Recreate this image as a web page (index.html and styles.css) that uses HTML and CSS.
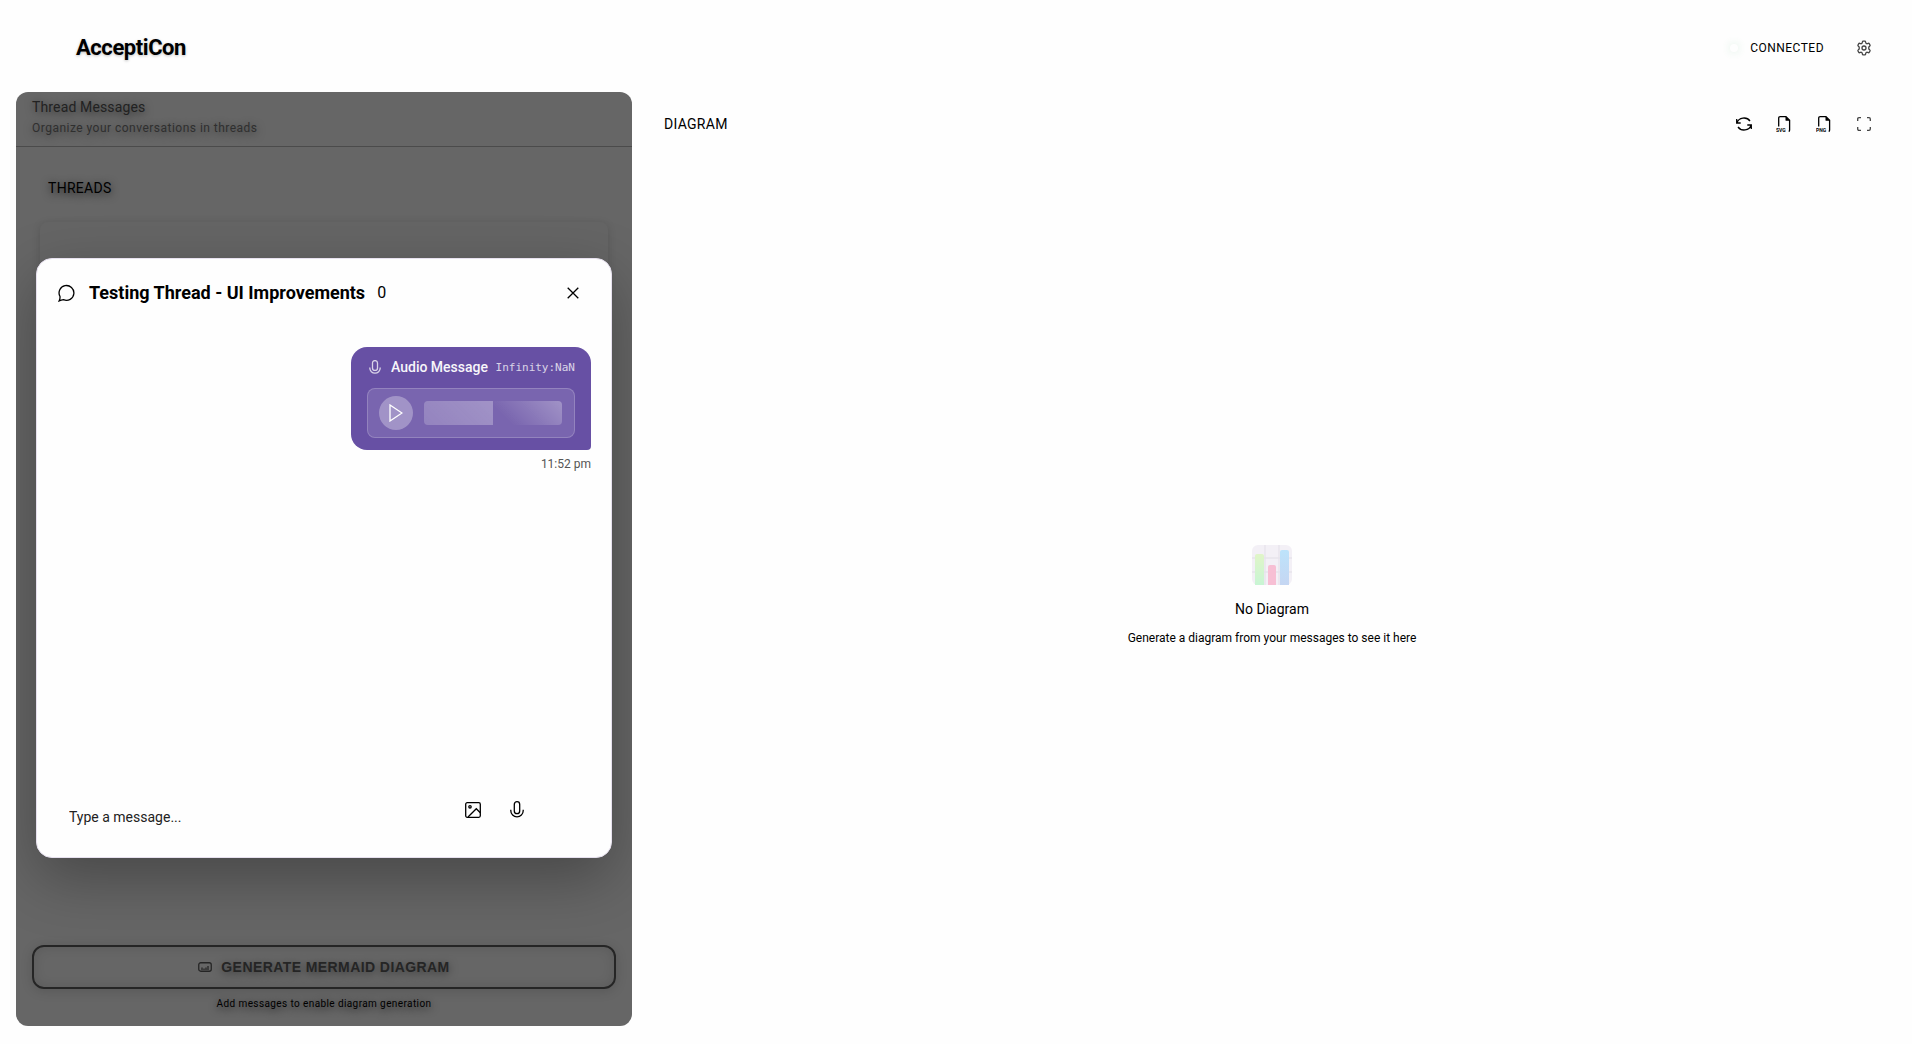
FILE: index.html
```
<!DOCTYPE html>
<html lang="en">
<head>
<meta charset="utf-8">
<meta name="viewport" content="width=device-width, initial-scale=1">
<title>AcceptiCon</title>
<link rel="stylesheet" href="styles.css">
</head>
<body>
<div class="app">
  <header class="topbar">
    <h1 class="brand">AcceptiCon</h1>
    <div class="status">
      <span class="status-dot"></span>
      <span class="status-text">CONNECTED</span>
      <button class="icon-btn" type="button" aria-label="Settings">
        <svg class="icon muted" viewBox="0 0 16 16"><path d="M7.200 1.200h1.600q.7 0 .8.700l.3 1.300 1 .6 1.400-.5q.6-.2.900.3l.8 1.400q.3.600-.2 1L12.800 7v2l1 1q.5.400.2 1l-.8 1.400q-.3.500-.9.300l-1.400-.5-1 .6-.3 1.300q-.1.700-.8.700H7.200q-.7 0-.8-.7l-.3-1.300-1-.6-1.400.5q-.6.200-.9-.3L2 11q-.3-.6.2-1l1-1V7l-1-1q-.5-.4-.2-1l.8-1.400q.3-.5.9-.3l1.400.5 1-.6.3-1.300q.1-.7.800-.7z"/><circle cx="8" cy="8" r="2"/></svg>
      </button>
    </div>
  </header>
  <div class="workspace">
    <aside class="sidebar">
      <div class="sidebar-head">
        <h2 class="sidebar-title">Thread Messages</h2>
        <p class="sidebar-sub">Organize your conversations in threads</p>
      </div>
      <div class="threads">
        <h3 class="threads-title">THREADS</h3>
        <div class="thread-card"></div>
      </div>
      <div class="generate">
        <button class="generate-btn" type="button">
          <svg class="generate-icon" viewBox="0 0 14 10"><rect x=".75" y=".75" width="12.5" height="8.5" rx="2"/><path d="M4 8V5.500M6 8V6.500M8 8V5.500M10 8V4"/></svg>
          GENERATE MERMAID DIAGRAM
        </button>
        <p class="generate-hint">Add messages to enable diagram generation</p>
      </div>
      <div class="overlay">
        <section class="modal" role="dialog" aria-labelledby="modal-title">
          <header class="modal-head">
            <svg class="chat-icon" viewBox="0 0 18 18"><path d="M1.200 16.800q1-2 .8-4.300A7.400 7.400 0 1 1 5.500 15.700q-2.300.3-4.300 1.100Z"/></svg>
            <h2 class="modal-title" id="modal-title">Testing Thread - UI Improvements</h2>
            <span class="modal-count">0</span>
            <button class="close-btn" type="button" aria-label="Close">
              <svg class="close-icon" viewBox="0 0 12 12"><path d="m.7.7 10.600 10.600M11.300.7.7 11.300"/></svg>
            </button>
          </header>
          <div class="messages">
            <div class="bubble">
              <div class="bubble-head">
                <svg class="mic-small" viewBox="0 0 12 14"><rect x="3.500" y=".6" width="5" height="9.800" rx="2.500"/><path d="M.8 7.500v.5a5.200 5.200 0 0 0 10.400 0v-.5"/></svg>
                <span class="audio-label">Audio Message</span>
                <span class="audio-time">Infinity:NaN</span>
              </div>
              <div class="player">
                <button class="play-btn" type="button" aria-label="Play"><svg class="play-icon" viewBox="0 0 14 18"><path d="M1 1v16l12-8z"/></svg></button>
                <div class="wave"></div>
              </div>
            </div>
            <time class="stamp">11:52 pm</time>
          </div>
          <form class="composer">
            <input class="composer-input" type="text" placeholder="Type a message..." aria-label="Message">
            <button class="composer-btn" type="button" aria-label="Attach image"><svg class="image-icon" viewBox="0 0 16 16"><rect x=".7" y=".7" width="14.600" height="14.600" rx="1.500"/><circle cx="5" cy="4.800" r="1.200"/><path d="m3 15 8.300-8.300 4 4"/></svg></button>
            <button class="composer-btn" type="button" aria-label="Record audio"><svg class="mic-icon" viewBox="0 0 14 18"><rect x="4.300" y=".7" width="5.400" height="12" rx="2.700"/><path d="M.8 8.700v1a6.200 6.200 0 0 0 12.400 0v-1"/></svg></button>
          </form>
        </section>
      </div>
    </aside>
    <main class="diagram">
      <div class="diagram-head">
        <h2 class="diagram-title">DIAGRAM</h2>
        <div class="tools">
          <button class="icon-btn" type="button" aria-label="Refresh"><svg class="icon" viewBox="0 0 16 16"><path d="M.7 3v4h4M15.300 13V9h-4M1 6.800A7.200 6.500 0 0 1 14 5M15 9.200A7.200 6.500 0 0 1 2 11"/></svg></button>
          <button class="icon-btn" type="button" aria-label="Export SVG"><svg class="icon" viewBox="0 0 16 16"><path d="M2.700 10.500V2.200q0-1.500 1.500-1.500H10l3.600 3.600v9.700q0 1.300-.9 1.500"/><path class="fold" d="M9.500.7v3.600q0 .4.400.4h3.700z"/><text class="file-text" x="0" y="15.800">SVG</text></svg></button>
          <button class="icon-btn" type="button" aria-label="Export PNG"><svg class="icon" viewBox="0 0 16 16"><path d="M2.700 10.500V2.200q0-1.500 1.500-1.500H10l3.600 3.600v9.700q0 1.300-.9 1.500"/><path class="fold" d="M9.500.7v3.600q0 .4.400.4h3.700z"/><text class="file-text" x="0" y="15.800">PNG</text></svg></button>
          <button class="icon-btn" type="button" aria-label="Full screen"><svg class="icon muted" viewBox="0 0 16 16"><path d="M1.700 5V3q0-1.300 1.300-1.300h2M11 1.700h2q1.300 0 1.300 1.300v2M14.300 11v2q0 1.300-1.300 1.300h-2M5 14.300H3q-1.300 0-1.300-1.300v-2"/></svg></button>
        </div>
      </div>
      <div class="empty">
        <svg class="empty-icon" viewBox="0 0 40 40"><defs><linearGradient id="green" x2="0" y2="1"><stop stop-color="#e0f5c8"/><stop offset="1" stop-color="#c8f5d4"/></linearGradient><linearGradient id="blue" x2="0" y2="1"><stop stop-color="#bde3fb"/><stop offset="1" stop-color="#c5d6f2"/></linearGradient></defs><rect width="40" height="40" rx="6" fill="#f3f0f6"/><path d="M13 0v40M27 0v40M0 13h40M0 27h40" stroke="#e7e3ec"/><path d="M3 40V11q0-2 2-2h5q2 0 2 2v29z" fill="url(#green)"/><path d="M16 40V22q0-2 2-2h4q2 0 2 2v18z" fill="#f7bfd4"/><path d="M28 40V7q0-2 2-2h5q2 0 2 2v33z" fill="url(#blue)"/></svg>
        <h3 class="empty-title">No Diagram</h3>
        <p class="empty-text">Generate a diagram from your messages to see it here</p>
      </div>
    </main>
  </div>
</div>
</body>
</html>
```
FILE: styles.css
```
* { box-sizing: border-box; }
body { margin: 0; background: #fefefe; color: #000; font-family: Roboto, sans-serif; font-size: 14px; }
h1, h2, h3, p { margin: 0; font-weight: 400; }
button { padding: 0; border: 0; background: none; color: inherit; font: inherit; }
svg { display: block; flex: none; fill: none; stroke: currentColor; stroke-width: 1.3; }

.app { display: flex; flex-direction: column; height: 100vh; min-height: 720px; }
.topbar { display: flex; align-items: center; justify-content: space-between; height: 92px; padding: 4px 32px 0 76px; flex: none; }
.brand { font-size: 22px; line-height: 32px; font-weight: 700; letter-spacing: -0.02em; text-shadow: 0 1px 3px rgba(0, 0, 0, .25); }
.status { display: flex; align-items: center; }
.status-dot { width: 8px; height: 8px; margin-right: 12px; border-radius: 50%; background: #fefefe; box-shadow: 0 0 8px rgba(76, 175, 110, .2); }
.status-text { margin-right: 24px; font-size: 12px; line-height: 16px; letter-spacing: 0.04em; }
.icon-btn { display: grid; place-items: center; width: 32px; height: 32px; }
.icon { width: 16px; height: 16px; }
.muted { color: #444; }

.workspace { display: grid; grid-template-columns: minmax(0, 616fr) minmax(0, 1248fr); gap: 16px; flex: 1; min-height: 0; padding: 0 16px 18px; }
.sidebar { position: relative; display: flex; flex-direction: column; overflow: hidden; border-radius: 12px; background: #fefefe; }
.sidebar-head { height: 55px; padding: 4px 16px 0; border-bottom: 1px solid #bbb; }
.sidebar-title { font-size: 14px; line-height: 22px; letter-spacing: 0.01em; color: #555; text-shadow: 0 2px 8px rgba(0, 0, 0, .6); }
.sidebar-sub { font-size: 12px; line-height: 20px; letter-spacing: 0.04em; color: #777; text-shadow: 0 2px 8px rgba(0, 0, 0, .5); }
.threads { flex: 1; padding: 30px 24px; }
.threads-title { padding-left: 8px; font-size: 14px; line-height: 22px; letter-spacing: 0.02em; text-shadow: 0 2px 8px rgba(0, 0, 0, .8); }
.thread-card { height: 80px; margin-top: 23px; border-radius: 8px; background: #fcfcfc; box-shadow: 0 2px 8px rgba(0, 0, 0, .15); }
.generate { padding: 0 16px 15px; }
.generate-btn { display: flex; align-items: center; justify-content: center; gap: 9px; width: 100%; height: 44px; border: 2px solid #5c5c5c; border-radius: 12px; color: #5c5c5c; font: 700 14px/20px "Liberation Sans", Arial, sans-serif; letter-spacing: 0.03em; text-shadow: 0 2px 8px rgba(0, 0, 0, .5); box-shadow: 0 2px 12px rgba(0, 0, 0, .15), inset 0 0 12px rgba(0, 0, 0, .12); }
.generate-icon { width: 14px; height: 10px; }
.generate-hint { margin-top: 7px; font-size: 10px; line-height: 15px; letter-spacing: 0.04em; text-align: center; text-shadow: 0 2px 8px rgba(0, 0, 0, .8); }

.overlay { position: absolute; inset: 0; display: flex; align-items: center; justify-content: center; padding: 0 20px 2px; background: rgba(0, 0, 0, .6); }
.modal { display: flex; flex-direction: column; width: 100%; height: 600px; border: 1px solid #e6e0ee; border-radius: 16px; background: #fefefe; box-shadow: 0 20px 60px rgba(0, 0, 0, .3); }
.modal-head { display: flex; align-items: center; height: 68px; padding: 0 28px 0 21px; }
.chat-icon { width: 18px; height: 18px; margin-right: 13px; }
.modal-title { margin-right: 12px; font-size: 18px; line-height: 24px; font-weight: 700; }
.modal-count { font-size: 16px; line-height: 24px; }
.close-btn { display: grid; place-items: center; width: 20px; height: 20px; margin-left: auto; }
.close-icon { width: 12px; height: 12px; }
.messages { display: flex; flex: 1; flex-direction: column; align-items: flex-end; padding: 20px; }
.bubble { width: 240px; padding: 8px 16px 12px; border-radius: 16px 16px 4px 16px; background: #6750a4; color: #fff; }
.bubble-head { display: flex; align-items: center; height: 24px; margin-bottom: 9px; }
.mic-small { width: 12px; height: 14px; margin: 0 10px 0 2px; opacity: .75; }
.audio-label { font-size: 14px; font-weight: 500; opacity: .95; }
.audio-time { margin-left: auto; font-family: "DejaVu Sans Mono", monospace; font-size: 11px; opacity: .75; }
.player { display: flex; align-items: center; gap: 11px; height: 50px; padding: 0 12px 0 11px; border: 1px solid rgba(255, 255, 255, .2); border-radius: 8px; background: rgba(255, 255, 255, .12); }
.play-btn { display: grid; place-items: center; width: 34px; height: 34px; flex: none; border-radius: 50%; background: rgba(255, 255, 255, .3); }
.play-icon { width: 14px; height: 18px; }
.wave { flex: 1; height: 24px; border-radius: 4px; background: linear-gradient(45deg, rgba(255, 255, 255, .2), rgba(255, 255, 255, .3)) left / 50% 100% no-repeat, linear-gradient(45deg, transparent 20%, rgba(255, 255, 255, .3)) right / 50% 100% no-repeat; }
.stamp { margin-top: 5px; font-size: 12px; line-height: 18px; color: #555; }
.composer { display: flex; height: 72px; padding: 0 84px 0 32px; }
.composer-input { flex: 1; min-width: 0; height: 32px; margin-top: 16px; padding: 0; border: 0; outline: 0; background: none; color: #000; font: 14px/20px Roboto, sans-serif; }
.composer-input::placeholder { color: #222; opacity: 1; }
.composer-btn { display: grid; place-items: center; width: 20px; height: 20px; margin: 15px 0 0 24px; }
.image-icon { width: 16px; height: 16px; }
.mic-icon { width: 14px; height: 18px; }

.diagram { display: flex; flex-direction: column; }
.diagram-head { display: flex; align-items: center; justify-content: space-between; height: 64px; padding: 0 16px; }
.diagram-title { font-size: 14px; line-height: 20px; letter-spacing: 0.02em; }
.tools { display: flex; gap: 8px; }
.fold { fill: currentColor; stroke: none; }
.file-text { fill: currentColor; stroke: none; font: 700 5px Roboto, sans-serif; }
.empty { display: flex; flex: 1; flex-direction: column; align-items: center; justify-content: center; padding-top: 10px; }
.empty-icon { width: 40px; height: 40px; margin-bottom: 12px; stroke: none; }
.empty-title { font-size: 14px; line-height: 24px; }
.empty-text { margin-top: 8px; font-size: 12px; line-height: 18px; }
```
